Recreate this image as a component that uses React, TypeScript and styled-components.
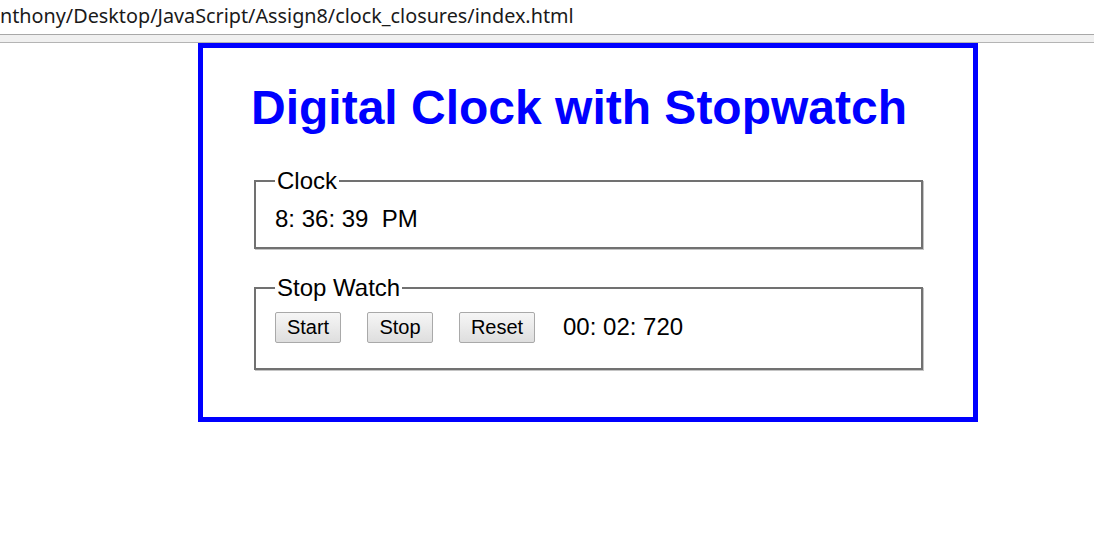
import React from "react";
import styled, { createGlobalStyle } from "styled-components";

const Global = createGlobalStyle`
  html, body { margin: 0; padding: 0; background: #ffffff; }
  body { font-family: "Liberation Sans", Arial, sans-serif; }
`;

const AddressBar = styled.div`
  height: 35px;
  display: flex;
  align-items: center;
  background: #ffffff;
  font-family: "Noto Sans", "Open Sans", sans-serif;
  font-size: 19.8px;
  color: #1a1a1a;
  white-space: nowrap;
  overflow: hidden;
  border-bottom: 1px solid #a8a8a8;
  padding-bottom: 3px;
  box-sizing: border-box;
`;

const Strip = styled.div`
  height: 8px;
  background: #f0f0f0;
  border-bottom: 1px solid #b4b4b4;
  box-sizing: border-box;
`;

const Page = styled.div`
  padding-left: 198px;
`;

const Frame = styled.div`
  width: 780px;
  height: 379px;
  box-sizing: border-box;
  border: 5px solid #0000ff;
  padding: 0 48px;
`;

const Title = styled.h1`
  margin: 32px 0 32px 0;
  font-family: "Liberation Sans", Arial, sans-serif;
  font-weight: bold;
  font-size: 48px;
  line-height: 55px;
  color: #0000ff;
  white-space: nowrap;
`;

const Group = styled.fieldset<{ $bottom: number; $after: number }>`
  margin: 0 2px ${(p) => p.$after}px 3px;
  padding: 10px 18px ${(p) => p.$bottom}px 19px;
  border: 2px solid #717171;
  box-shadow: 1px 1px 0 #c4c4c4;
  font-family: "Liberation Sans", Arial, sans-serif;
  font-size: 24px;
  line-height: 27.6px;
  color: #000000;
`;

const Legend = styled.legend`
  padding: 0 2px;
  font-size: 24px;
  line-height: 27.6px;
`;

const Line = styled.div`
  display: flex;
  align-items: center;
  gap: 26px;
  height: 31px;
`;

const Reading = styled.span<{ $gap?: number }>`
  font-size: 24px;
  margin-left: ${(p) => p.$gap ?? 0}px;
  white-space: pre;
`;

const Btn = styled.button`
  font-family: "Liberation Sans", Arial, sans-serif;
  font-size: 20px;
  line-height: 23px;
  height: 31px;
  padding: 3px 10px;
  border: 1px solid #a9a9a9;
  border-radius: 2px;
  background: linear-gradient(#f6f6f6, #dedede);
  color: #000000;
  box-sizing: border-box;
`;

export default function App() {
  return (
    <>
      <Global />
      <AddressBar>nthony/Desktop/JavaScript/Assign8/clock_closures/index.html</AddressBar>
      <Strip />
      <Page>
        <Frame>
          <Title>Digital Clock with Stopwatch</Title>
          <Group $bottom={15} $after={25}>
            <Legend>Clock</Legend>
            <Reading>{"8: 36: 39  PM"}</Reading>
          </Group>
          <Group $bottom={25} $after={0}>
            <Legend>Stop Watch</Legend>
            <Line>
              <Btn style={{ width: 66 }}>Start</Btn>
              <Btn style={{ width: 66 }}>Stop</Btn>
              <Btn style={{ width: 76 }}>Reset</Btn>
              <Reading $gap={2}>00: 02: 720</Reading>
            </Line>
          </Group>
        </Frame>
      </Page>
    </>
  );
}
